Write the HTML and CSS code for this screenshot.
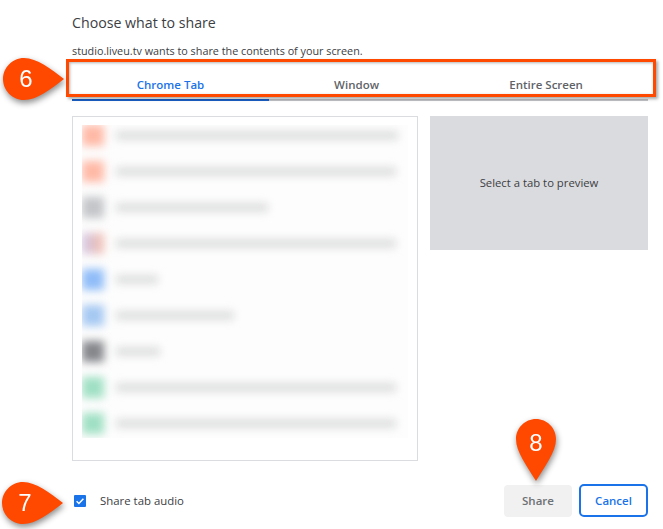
FILE: index.html
```html
<!DOCTYPE html>
<html>
<head>
  <meta charset="utf-8">
  <title>Choose what to share</title>
  <link rel="stylesheet" href="styles.css">
</head>
<body>
  <div class="dialog">
    <h1 class="title">Choose what to share</h1>
    <p class="subtitle">studio.liveu.tv wants to share the contents of your screen.</p>

    <div class="tabs">
      <div class="tab tab-active">Chrome Tab</div>
      <div class="tab">Window</div>
      <div class="tab">Entire Screen</div>
    </div>

    <div class="panes">
      <div class="tab-list">
        <div class="blur-area">
          <div class="row"><span class="fav peach"></span><span class="line" style="width:282px"></span></div>
          <div class="row"><span class="fav peach"></span><span class="line" style="width:280px"></span></div>
          <div class="row"><span class="fav grey"></span><span class="line" style="width:152px"></span></div>
          <div class="row"><span class="fav mauve"></span><span class="line" style="width:280px"></span></div>
          <div class="row"><span class="fav blue"></span><span class="line" style="width:42px"></span></div>
          <div class="row"><span class="fav pale-blue"></span><span class="line" style="width:118px"></span></div>
          <div class="row"><span class="fav dark"></span><span class="line" style="width:44px"></span></div>
          <div class="row"><span class="fav green"></span><span class="line" style="width:280px"></span></div>
          <div class="row"><span class="fav green"></span><span class="line" style="width:280px"></span></div>
        </div>
      </div>
      <div class="preview">Select a tab to preview</div>
    </div>

    <div class="footer">
      <label class="audio">
        <span class="check">
          <svg width="12" height="12" viewBox="0 0 12 12"><path d="M2.6 6.2l2.3 2.3 4.5-4.7" fill="none" stroke="#fff" stroke-width="1.5"/></svg>
        </span>
        Share tab audio
      </label>
      <div class="buttons">
        <button type="button" class="btn btn-share">Share</button>
        <button type="button" class="btn btn-cancel">Cancel</button>
      </div>
    </div>
  </div>

  <!-- annotations drawn over the screenshot -->
  <div class="highlight"></div>

  <div class="pin pin-6">
    <svg width="64" height="44" viewBox="0 0 64 44"><path d="M23 1C36 1 50 12 63 22 50 32 36 43 23 43 11 43 2 33 2 22S11 1 23 1z" fill="#ff4800"/></svg>
    <span class="pin-num">6</span>
  </div>
  <div class="pin pin-7">
    <svg width="64" height="44" viewBox="0 0 64 44"><path d="M23 1C36 1 50 12 63 22 50 32 36 43 23 43 11 43 2 33 2 22S11 1 23 1z" fill="#ff4800"/></svg>
    <span class="pin-num">7</span>
  </div>
  <div class="pin pin-8">
    <svg width="42" height="64" viewBox="0 0 42 64"><path d="M21 1C32 1 41 10 41 21 41 34 30 48 21 63 12 48 1 34 1 21 1 10 10 1 21 1z" fill="#ff4800"/></svg>
    <span class="pin-num">8</span>
  </div>
</body>
</html>
```

FILE: styles.css
```css
html, body {
  margin: 0;
  height: 529px;
  overflow: hidden;
  background: #fff;
}

body {
  font-family: "Open Sans", "Noto Sans", sans-serif;
  color: #3c4043;
}

.dialog {
  display: flex;
  flex-direction: column;
  margin: 0 15px 0 72px;
  padding-top: 14px;
}

.title {
  margin: 0;
  font-size: 14.2px;
  font-weight: 400;
  line-height: 18px;
  color: #3c4043;
}

.subtitle {
  margin: 11px 0 0;
  font-size: 10.8px;
  line-height: 16px;
  color: #3c4043;
}

.tabs {
  display: flex;
  margin-top: 5px;
  border-bottom: 2px solid #c4c5c8;
}

.tab {
  flex: 1 1 auto;
  padding: 4px 10px 0;
  height: 31px;
  margin-bottom: -2px;
  line-height: 33px;
  text-align: center;
  font-size: 11.5px;
  font-weight: 600;
  color: #5f6368;
}

.tab-active {
  flex: 0 0 197px;
  box-sizing: border-box;
  color: #1a73e8;
  border-bottom: 2px solid #1a5fc8;
  height: 37px;
}

.panes {
  display: grid;
  grid-template-columns: 346px 218px;
  gap: 12px;
  margin-top: 15px;
  align-items: start;
}

.tab-list {
  box-sizing: border-box;
  height: 345px;
  padding: 8px 9px;
  border: 1px solid #dadce0;
}

.blur-area {
  height: 313px;
  overflow: hidden;
  background: #fdfdfd;
}

.row {
  display: flex;
  align-items: center;
  height: 36px;
  gap: 12px;
  filter: blur(4.5px);
}

.row:first-child {
  margin-top: -8px;
}

.fav {
  flex: none;
  width: 22px;
  height: 21px;
}

.line {
  height: 9px;
  background: #dddede;
}

.peach { background: #ffb9a6; }
.grey { background: #c3c5c8; }
.mauve { background: linear-gradient(90deg, #cfc6e6, #f5bfae); }
.blue { background: #8fbcf8; }
.pale-blue { background: #a5c8f2; }
.dark { background: #85878b; }
.green { background: #a0e0c4; }

.preview {
  box-sizing: border-box;
  height: 134px;
  padding-bottom: 2px;
  display: flex;
  align-items: center;
  justify-content: center;
  background: #dadbde;
  font-size: 11.3px;
  color: #3c4043;
}

.footer {
  display: flex;
  align-items: center;
  justify-content: space-between;
  margin-top: 23px;
}

.audio {
  display: flex;
  align-items: center;
  gap: 14px;
  margin-left: 2px;
  font-size: 11.4px;
  color: #3c4043;
}

.check {
  display: flex;
  width: 12px;
  height: 12px;
  background: #1a73e8;
  border-radius: 1px;
}

.buttons {
  display: flex;
  align-items: center;
  gap: 7px;
}

.btn {
  font-family: inherit;
  font-size: 11.5px;
  font-weight: 600;
  border-radius: 4px;
  background: #fff;
}

.btn-share {
  width: 68px;
  height: 32px;
  border: 0;
  background: #f1f1f1;
  color: #6d7074;
}

.btn-cancel {
  width: 69px;
  height: 33px;
  border: 2px solid #1a73e8;
  border-radius: 5px;
  color: #1a73e8;
}

.highlight {
  position: absolute;
  left: 66px;
  top: 59px;
  width: 584px;
  height: 32px;
  border: 3px solid #ff4800;
  box-shadow: 2px 2px 3px rgba(0, 0, 0, 0.35), inset 1px 1px 3px rgba(0, 0, 0, 0.3);
}

.pin {
  position: absolute;
  display: flex;
  filter: drop-shadow(1px 3px 3px rgba(0, 0, 0, 0.45));
}

.pin-6 { left: 1px; top: 57px; }
.pin-7 { left: 0; top: 481px; }
.pin-8 { left: 515px; top: 418px; }

.pin-num {
  position: absolute;
  left: 2px;
  top: 0;
  width: 46px;
  height: 44px;
  text-align: center;
  line-height: 44px;
  font-family: "Liberation Sans", sans-serif;
  font-size: 24px;
  color: #fff;
}

.pin-8 .pin-num {
  left: 0;
  width: 42px;
  line-height: 50px;
}
```
